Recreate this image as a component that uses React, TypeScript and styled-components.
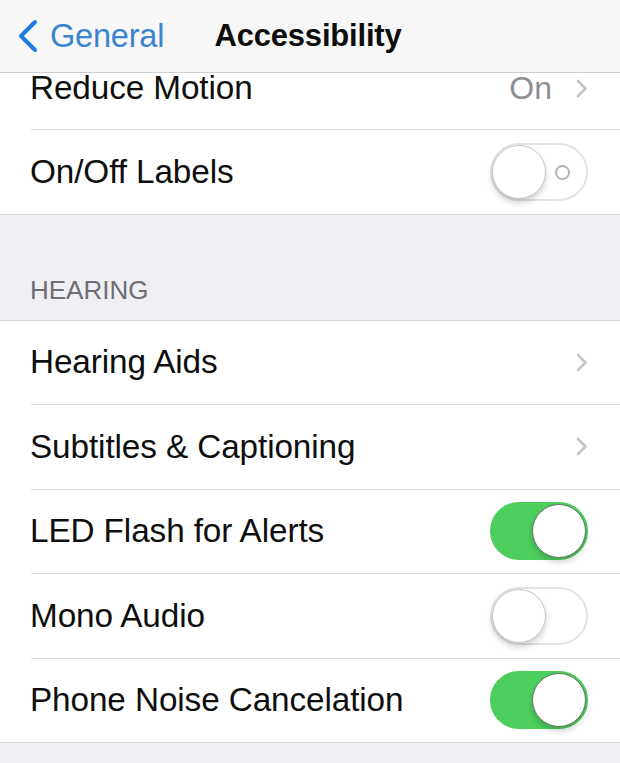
import styled, { createGlobalStyle } from "styled-components";

type RowData = {
    label: string;
    value?: string;
    chevron?: boolean;
    toggle?: boolean;
    labels?: boolean;
};

const TOP_ROWS: RowData[] = [
    { label: "Reduce Motion", value: "On", chevron: true },
    { label: "On/Off Labels", toggle: false, labels: true },
];

const HEARING_ROWS: RowData[] = [
    { label: "Hearing Aids", chevron: true },
    { label: "Subtitles & Captioning", chevron: true },
    { label: "LED Flash for Alerts", toggle: true },
    { label: "Mono Audio", toggle: false },
    { label: "Phone Noise Cancelation", toggle: true },
];

const Chevron = () => (
    <svg width="12" height="19" viewBox="0 0 12 19">
        <polyline
            points="2,2 9.5,9.5 2,17"
            fill="none"
            stroke="#c3c3c8"
            strokeWidth="2.6"
            strokeLinecap="round"
            strokeLinejoin="round"
        />
    </svg>
);

const BackChevron = () => (
    <svg width="22" height="34" viewBox="0 0 22 34">
        <polyline
            points="19,3 5,17 19,31"
            fill="none"
            stroke="#1e7be0"
            strokeWidth="4"
            strokeLinecap="round"
            strokeLinejoin="round"
        />
    </svg>
);

const Toggle = ({ on, labels }: { on: boolean; labels?: boolean }) => (
    <Switch $on={on}>
        <Knob $on={on} />
        {labels && !on && <OffMark />}
    </Switch>
);

// partial: the first row is scrolled half under the nav bar
const Row = ({
    row,
    last,
    partial,
}: {
    row: RowData;
    last: boolean;
    partial?: boolean;
}) => (
    <RowOuter>
        <RowBody $last={last} $partial={!!partial}>
            <Label>{row.label}</Label>
            <Accessory>
                {row.value && <Value>{row.value}</Value>}
                {row.chevron && <Chevron />}
                {row.toggle !== undefined && (
                    <Toggle on={row.toggle} labels={row.labels} />
                )}
            </Accessory>
        </RowBody>
    </RowOuter>
);

export default function App() {
    return (
        <>
            <GlobalStyle />
            <Screen>
                <NavBar>
                    <Back>
                        <BackChevron />
                        <span>General</span>
                    </Back>
                    <Title>Accessibility</Title>
                    <span />
                </NavBar>
                <Content>
                    <Group>
                        {TOP_ROWS.map((r, i) => (
                            <Row
                                key={r.label}
                                row={r}
                                partial={i === 0}
                                last={i === TOP_ROWS.length - 1}
                            />
                        ))}
                    </Group>
                    <SectionHeader>HEARING</SectionHeader>
                    <Group>
                        {HEARING_ROWS.map((r, i) => (
                            <Row
                                key={r.label}
                                row={r}
                                last={i === HEARING_ROWS.length - 1}
                            />
                        ))}
                    </Group>
                </Content>
            </Screen>
        </>
    );
}

const GlobalStyle = createGlobalStyle`
    html, body {
        margin: 0;
        padding: 0;
        background: #efeff4;
    }
    body {
        font-family: "Liberation Sans", Arial, sans-serif;
        -webkit-font-smoothing: antialiased;
    }
`;

const Screen = styled.div`
    width: 620px;
    height: 763px;
    display: flex;
    flex-direction: column;
    overflow: hidden;
    background: #efeff4;
`;

const NavBar = styled.header`
    flex: none;
    height: 72px;
    display: grid;
    grid-template-columns: 1fr auto 1fr;
    align-items: center;
    background: #f7f7f7;
    border-bottom: 1px solid #cfcfd2;
`;

const Back = styled.div`
    display: flex;
    align-items: center;
    gap: 12px;
    padding-left: 16px;
    color: #3a84d2;
    font-size: 32.5px;
    letter-spacing: -0.2px;
`;

const Title = styled.div`
    font-size: 31px;
    font-weight: 700;
    color: #0d0d0d;
    letter-spacing: -0.2px;
    margin-left: -4px;
`;

const Content = styled.div`
    flex: 1;
    display: flex;
    flex-direction: column;
`;

const Group = styled.div`
    background: #fff;
    border-bottom: 1px solid #d6d6da;
`;

const RowOuter = styled.div`
    padding-left: 31px;
`;

const RowBody = styled.div<{ $last: boolean; $partial: boolean }>`
    height: ${({ $partial }) => ($partial ? "56px" : "83.5px")};
    display: flex;
    align-items: ${({ $partial }) => ($partial ? "flex-start" : "center")};
    justify-content: space-between;
    padding-right: 32px;
    border-bottom: ${({ $last }) => ($last ? "none" : "1px solid #dedee2")};
    & > * {
        ${({ $partial }) =>
            $partial ? "height: 30px; line-height: 30px;" : ""}
    }
`;

const Label = styled.span`
    font-size: 33.3px;
    color: #0e0e0e;
    letter-spacing: -0.1px;
    margin-left: -1px;
`;

const Accessory = styled.div`
    display: flex;
    align-items: center;
    gap: 24px;
`;

const Value = styled.span`
    font-size: 32px;
    color: #8e8e93;
`;

const Switch = styled.div<{ $on: boolean }>`
    position: relative;
    width: 98px;
    height: 58px;
    box-sizing: border-box;
    border-radius: 29px;
    display: flex;
    align-items: center;
    justify-content: ${({ $on }) => ($on ? "flex-end" : "flex-start")};
    background: ${({ $on }) => ($on ? "#4ccf5d" : "#fff")};
    border: 2px solid ${({ $on }) => ($on ? "#4ccf5d" : "#e4e4e6")};
`;

const Knob = styled.div<{ $on: boolean }>`
    width: 54px;
    height: 54px;
    border-radius: 50%;
    background: #fff;
    box-sizing: border-box;
    border: 1.5px solid ${({ $on }) => ($on ? "#5c7660" : "#c4c4c8")};
    box-shadow: 0 4px 6px rgba(0, 0, 0, 0.18);
`;

const OffMark = styled.div`
    position: absolute;
    right: 16px;
    top: 50%;
    width: 11px;
    height: 11px;
    margin-top: -7px;
    border-radius: 50%;
    border: 2px solid #b4b4b8;
`;

const SectionHeader = styled.div`
    height: 106px;
    box-sizing: border-box;
    display: flex;
    align-items: flex-end;
    padding: 0 30px 17px;
    font-size: 26px;
    line-height: 1;
    color: #6d6d72;
    border-bottom: 1px solid #d6d6da;
`;
